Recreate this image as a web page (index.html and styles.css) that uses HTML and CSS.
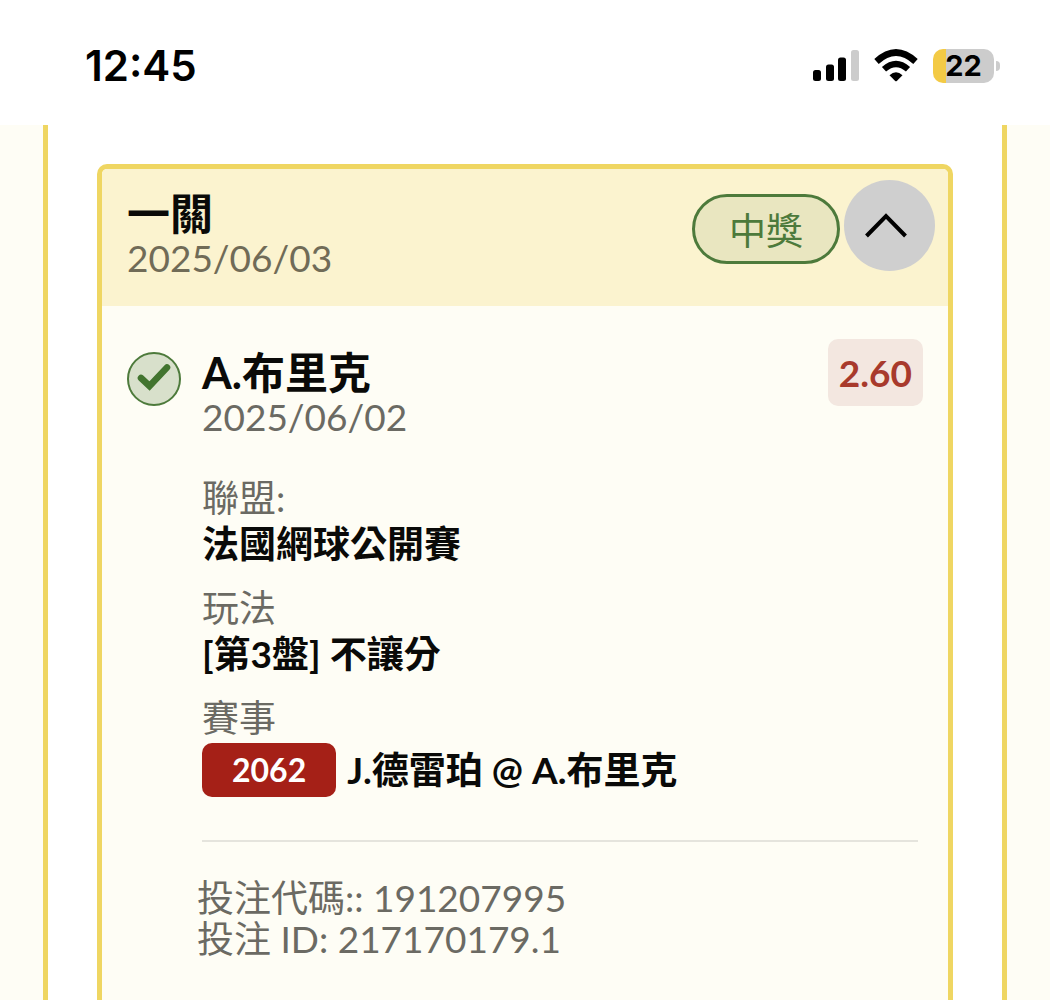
FILE: index.html
```
<!DOCTYPE html>
<html lang="zh-Hant">
<head>
    <meta charset="UTF-8">
    <meta name="viewport" content="width=device-width, initial-scale=1.0">
    <title>投注紀錄</title>
    <link rel="stylesheet" href="styles.css">
</head>
<body>
    <header class="status-bar">
        <time class="clock">12:45</time>
        <div class="status-icons">
            <svg class="signal" width="46" height="32" viewBox="0 0 46 32" aria-hidden="true">
                <rect x="0" y="20" width="8" height="11" rx="2.5"/>
                <rect x="13" y="14.5" width="8" height="16.5" rx="2.5"/>
                <rect x="25" y="7.5" width="8" height="23.5" rx="2.5"/>
                <rect x="38" y="0" width="8" height="31" rx="2.5" fill="#cccccc"/>
            </svg>
            <svg class="wifi" width="44" height="34" viewBox="0 0 44 34" aria-hidden="true">
                <path d="M2.500 12.500 Q22 -5.500 41.500 12.500" fill="none" stroke="#000" stroke-width="6.500"/>
                <path d="M10 20.300 Q22 9.500 34 20.300" fill="none" stroke="#000" stroke-width="6.200"/>
                <path d="M15.500 26.200 Q22 20.500 28.500 26.200 L22.800 32 Q22 32.700 21.200 32 Z"/>
            </svg>
            <div class="battery">22</div>
        </div>
    </header>

    <main class="panel">
        <article class="card">
            <div class="card-header">
                <div class="card-heading">
                    <h1 class="title">一關</h1>
                    <p class="date">2025/06/03</p>
                </div>
                <div class="card-actions">
                    <span class="result">中獎</span>
                    <button class="toggle" type="button" aria-label="收合">
                        <svg width="44" height="28" viewBox="0 0 44 28" aria-hidden="true">
                            <path d="M2.500 24 L22 4 L41.500 24" fill="none" stroke="#000" stroke-width="4"/>
                        </svg>
                    </button>
                </div>
            </div>

            <div class="card-body">
                <svg class="check" width="54" height="54" viewBox="0 0 54 54" aria-hidden="true">
                    <circle cx="27" cy="27" r="26" fill="#d8e0cb" stroke="#4d7a3b" stroke-width="2"/>
                    <path d="M14 26 L22.500 34 L40 15.500" fill="none" stroke="#42742f" stroke-width="6.600" stroke-linecap="round"/>
                </svg>
                <div class="selection">
                    <div class="selection-top">
                        <div class="selection-name">
                            <h2 class="title">A.布里克</h2>
                            <p class="date">2025/06/02</p>
                        </div>
                        <span class="odds">2.60</span>
                    </div>
                    <dl class="details">
                        <div class="detail">
                            <dt>聯盟:</dt>
                            <dd>法國網球公開賽</dd>
                        </div>
                        <div class="detail">
                            <dt>玩法</dt>
                            <dd>[第3盤] 不讓分</dd>
                        </div>
                        <div class="detail">
                            <dt>賽事</dt>
                            <dd class="match"><span class="match-code">2062</span>J.德雷珀 @ A.布里克</dd>
                        </div>
                    </dl>
                    <div class="bet-info">
                        <p>投注代碼:: 191207995</p>
                        <p>投注 ID: 217170179.1</p>
                    </div>
                </div>
            </div>
        </article>
    </main>
</body>
</html>
```

FILE: styles.css
```
* {
    box-sizing: border-box;
}
body {
    margin: 0;
    min-height: 100vh;
    display: flex;
    flex-direction: column;
    background-color: #fefdf5;
    color: #0a0a08;
    font-family: Lato, "Noto Sans CJK TC", sans-serif;
    font-size: 37px;
}
h1, h2, p, dl, dd {
    margin: 0;
}

/* Status bar */
.status-bar {
    display: flex;
    justify-content: space-between;
    align-items: center;
    height: 125px;
    padding: 6px 56px 0 85px;
    background-color: #fff;
    color: #000;
    font-family: Inter, sans-serif;
    flex-shrink: 0;
}
.clock {
    font-size: 42px;
    font-weight: 600;
    line-height: 50px;
}
.status-icons {
    display: flex;
    align-items: center;
    gap: 15px;
}
.battery {
    position: relative;
    width: 61px;
    height: 34px;
    border-radius: 10px;
    background: linear-gradient(to right, #f3ca45 13px, #cccccc 13px);
    text-align: center;
    font-size: 29px;
    font-weight: 700;
    line-height: 34px;
}
.battery::after {
    content: '';
    position: absolute;
    top: 12px;
    right: -6px;
    width: 4px;
    height: 10px;
    border-radius: 0 4px 4px 0;
    background-color: #cccccc;
}

/* Outer panel */
.panel {
    flex: 1;
    display: flex;
    margin: 0 43px;
    padding: 39px 49px 0;
    border: solid #efd662;
    border-width: 0 5px;
    background-color: #fff;
}
.card {
    flex: 1;
    border: 5px solid #efd662;
    border-bottom: 0;
    border-radius: 10px 10px 0 0;
    background-color: #fefdf5;
}
.card-header {
    display: flex;
    justify-content: space-between;
    align-items: flex-start;
    padding: 11px 13px 27px 25px;
    background-color: #fbf3cf;
    border-radius: 5px 5px 0 0;
}
.card-heading {
    padding-top: 12px;
}
.title {
    font-size: 43px;
    font-weight: 700;
    line-height: 44px;
}
.date {
    line-height: 43px;
    color: #6b6a63;
}
.card-header .date {
    color: #706b57;
}
.card-actions {
    display: flex;
    gap: 4px;
}
.result {
    height: 70px;
    margin-top: 14px;
    padding: 0 34px;
    border: 3px solid #4d7a3b;
    border-radius: 35px;
    background-color: #e9e6c0;
    color: #4d7a3b;
    line-height: 67px;
}
.toggle {
    display: flex;
    align-items: center;
    justify-content: center;
    width: 91px;
    height: 91px;
    padding: 0 8px 0 0;
    border: 0;
    border-radius: 50%;
    background-color: #cfcfcf;
    color: #000;
    cursor: pointer;
}

/* Bet selection */
.card-body {
    display: flex;
    gap: 21px;
    padding: 33px 25px;
}
.check {
    flex-shrink: 0;
    margin-top: 13px;
}
.selection {
    flex: 1;
}
.selection-top {
    display: flex;
    justify-content: space-between;
    align-items: flex-start;
}
.selection-name {
    padding-top: 12px;
}
.odds {
    padding: 0 11px;
    border-radius: 10px;
    background-color: #f3e7e0;
    color: #a83a2c;
    font-weight: 700;
    line-height: 67px;
}
.details {
    display: flex;
    flex-direction: column;
    gap: 18px;
    padding-top: 37px;
}
.detail {
    line-height: 46px;
}
.detail dt {
    color: #6b6a63;
}
.detail dd {
    font-weight: 700;
}
.match {
    display: flex;
    align-items: center;
    gap: 11px;
    padding-top: 2px;
    line-height: 54px;
}
.match-code {
    padding: 0 30px;
    border-radius: 10px;
    background-color: #a52017;
    color: #fff;
    font-size: 32px;
}
.bet-info {
    margin: 43px 5px 0 0;
    padding-top: 35px;
    border-top: 2px solid #e5e4dd;
    color: #6b6a63;
    line-height: 41px;
}
.bet-info p {
    margin-left: -5px;
}
```
